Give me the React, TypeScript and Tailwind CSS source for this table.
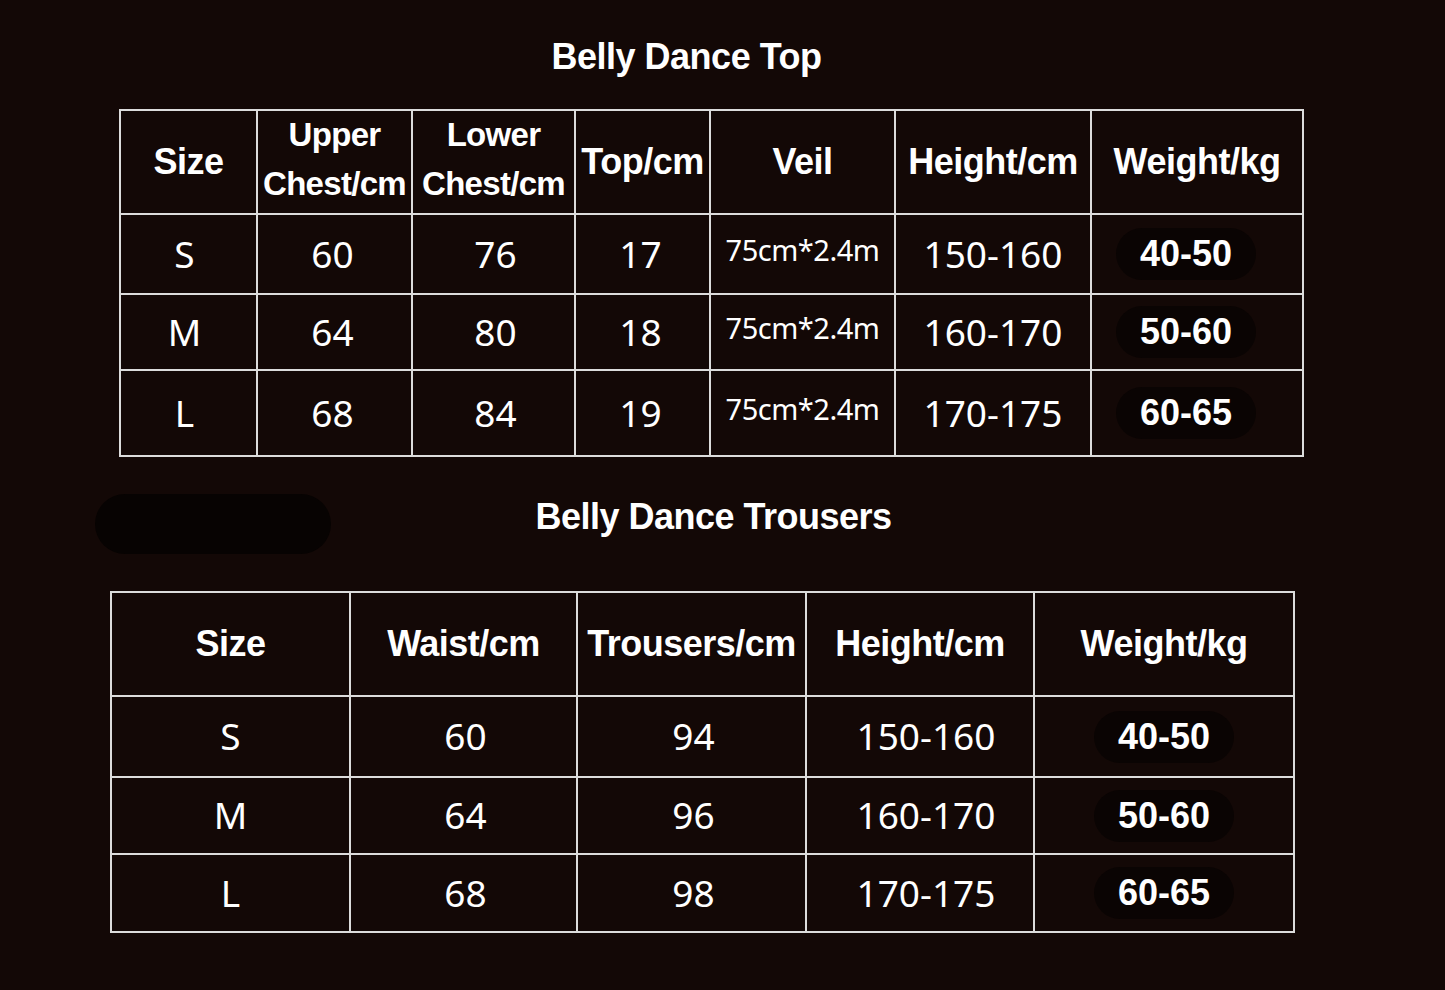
const topHeaders = [
  { label: ["Size"], w: "w-[137px]" },
  { label: ["Upper", "Chest/cm"], w: "w-[155px]" },
  { label: ["Lower", "Chest/cm"], w: "w-[163px]" },
  { label: ["Top/cm"], w: "w-[135px]" },
  { label: ["Veil"], w: "w-[185px]" },
  { label: ["Height/cm"], w: "w-[196px]" },
  { label: ["Weight/kg"], w: "w-[212px]" },
];

const topRows = [
  { size: "S", upper: "60", lower: "76", top: "17", veil: "75cm*2.4m", height: "150-160", weight: "40-50", h: "h-[80px]" },
  { size: "M", upper: "64", lower: "80", top: "18", veil: "75cm*2.4m", height: "160-170", weight: "50-60", h: "h-[76px]" },
  { size: "L", upper: "68", lower: "84", top: "19", veil: "75cm*2.4m", height: "170-175", weight: "60-65", h: "h-[86px]" },
];

const trouserHeaders = [
  { label: "Size", w: "w-[239px]" },
  { label: "Waist/cm", w: "w-[227px]" },
  { label: "Trousers/cm", w: "w-[229px]" },
  { label: "Height/cm", w: "w-[228px]" },
  { label: "Weight/kg", w: "w-[260px]" },
];

const trouserRows = [
  { size: "S", waist: "60", len: "94", height: "150-160", weight: "40-50", h: "h-[81px]" },
  { size: "M", waist: "64", len: "96", height: "160-170", weight: "50-60", h: "h-[77px]" },
  { size: "L", waist: "68", len: "98", height: "170-175", weight: "60-65", h: "h-[78px]" },
];

const arial = "font-['Liberation_Sans',Arial,sans-serif] font-bold leading-none";
const head = `${arial} text-[36px] tracking-[-0.5px]`;
const num = "font-['Noto_Sans',sans-serif] text-[37px] leading-none";
const cell = "border-2 border-[#dcdcdc] text-center align-middle p-0 overflow-visible whitespace-nowrap";

function Weight({ value }: { value: string }) {
  return (
    <span className={`inline-block rounded-full bg-[#0a0403] px-6 py-2 ${arial} text-[36px]`}>
      {value}
    </span>
  );
}

export default function App() {
  return (
    <div className="relative w-[1445px] h-[990px] bg-[#130806] text-white overflow-hidden">
      <div className="absolute left-[95px] top-[494px] w-[236px] h-[60px] rounded-[30px] bg-[#070302]" />

      <h1 className={`pt-[39px] text-center pr-[72px] ${head}`}>Belly Dance Top</h1>

      <table className="relative mt-[34px] ml-[119px] w-[1185px] border-collapse table-fixed">
        <thead>
          <tr className="h-[104px]">
            {topHeaders.map((col) => (
              <th key={col.label.join()} className={`${cell} ${col.w}`}>
                {col.label.length > 1 ? (
                  <div className={`flex flex-col items-center gap-[16px] -mt-[6px] ${arial} text-[33px] tracking-[-0.7px]`}>
                    {col.label.map((l) => (
                      <span key={l}>{l}</span>
                    ))}
                  </div>
                ) : (
                  <span className={head}>{col.label[0]}</span>
                )}
              </th>
            ))}
          </tr>
        </thead>
        <tbody>
          {topRows.map((r) => (
            <tr key={r.size} className={r.h}>
              <td className={cell}><span className={`${num} pr-2`}>{r.size}</span></td>
              <td className={cell}><span className={`${num} pr-1`}>{r.upper}</span></td>
              <td className={cell}><span className={`${num} pl-1`}>{r.lower}</span></td>
              <td className={cell}><span className={`${num} pr-1`}>{r.top}</span></td>
              <td className={cell}>
                <span className="font-['Noto_Sans',sans-serif] text-[29px] tracking-[-0.5px] leading-none relative -top-[3px]">{r.veil}</span>
              </td>
              <td className={cell}><span className={num}>{r.height}</span></td>
              <td className={`${cell} pr-[22px]`}><Weight value={r.weight} /></td>
            </tr>
          ))}
        </tbody>
      </table>

      <h2 className={`mt-[42px] text-center pr-[18px] ${head}`}>Belly Dance Trousers</h2>

      <table className="mt-[56px] ml-[110px] w-[1185px] border-collapse table-fixed">
        <thead>
          <tr className="h-[104px]">
            {trouserHeaders.map((col) => (
              <th key={col.label} className={`${cell} ${col.w}`}>
                <span className={head}>{col.label}</span>
              </th>
            ))}
          </tr>
        </thead>
        <tbody>
          {trouserRows.map((r) => (
            <tr key={r.size} className={r.h}>
              <td className={cell}><span className={num}>{r.size}</span></td>
              <td className={cell}><span className={`${num} pl-1`}>{r.waist}</span></td>
              <td className={cell}><span className={`${num} pl-1`}>{r.len}</span></td>
              <td className={cell}><span className={`${num} pl-3`}>{r.height}</span></td>
              <td className={cell}><Weight value={r.weight} /></td>
            </tr>
          ))}
        </tbody>
      </table>
    </div>
  );
}
